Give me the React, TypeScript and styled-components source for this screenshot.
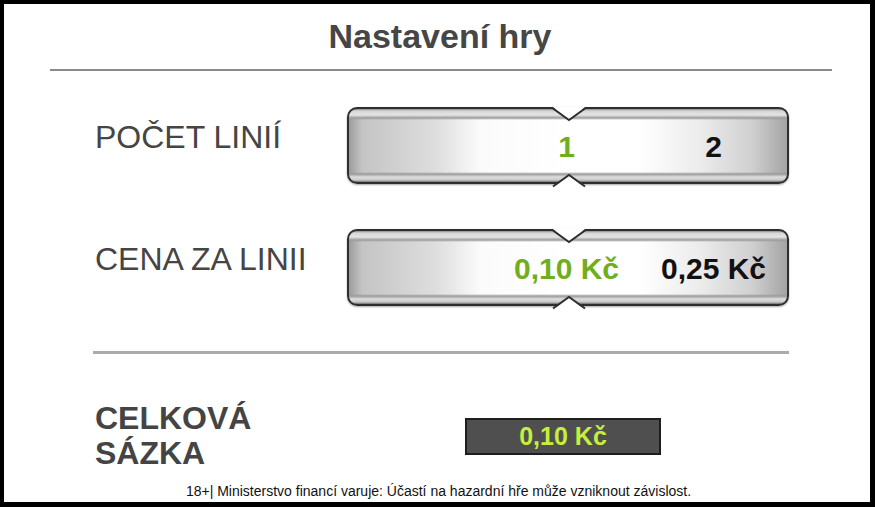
import React from 'react';
import styled, { createGlobalStyle } from 'styled-components';

const GlobalStyle = createGlobalStyle`
  html, body {
    margin: 0;
    padding: 0;
    background: #ffffff;
  }
  body {
    font-family: 'Liberation Sans', Arial, sans-serif;
  }
`;

const Frame = styled.div`
  box-sizing: border-box;
  width: 875px;
  height: 507px;
  border-style: solid;
  border-color: #000;
  border-width: 4px 5px 5px 4px;
  background: #fff;
  display: flex;
  flex-direction: column;
  overflow: hidden;
`;

const Title = styled.h1`
  margin: 12px 0 0;
  height: 41px;
  line-height: 41px;
  font-size: 34px;
  font-weight: 700;
  color: #464646;
  text-align: center;
  padding-left: 6px;
`;

const Divider = styled.div<{ $left: number; $width: number; $thick: number; $color: string; $top: number }>`
  margin: ${({ $top }) => $top}px 0 0 ${({ $left }) => $left}px;
  width: ${({ $width }) => $width}px;
  height: ${({ $thick }) => $thick}px;
  background: ${({ $color }) => $color};
`;

const Row = styled.div<{ $top: number }>`
  display: flex;
  align-items: flex-start;
  margin: ${({ $top }) => $top}px 0 0 91px;
`;

const RowLabel = styled.div`
  width: 252px;
  margin-top: 12px;
  font-size: 32px;
  line-height: 37px;
  color: #454545;
  white-space: nowrap;
`;

const Slider = styled.div`
  position: relative;
  box-sizing: border-box;
  width: 442px;
  height: 77px;
  border: 2px solid #2e2e2e;
  border-radius: 10px;
  box-shadow: 0 1px 2px rgba(0, 0, 0, 0.35);
  background:
    linear-gradient(to bottom, #8c8c8c 0, #d6d6d6 2px, #e4e4e4 6px, #b4b4b4 8px, #9a9a9a 9px, rgba(255,255,255,0) 11px) top / 100% 12px no-repeat,
    linear-gradient(to top, #6e6e6e 0, #c8c8c8 2px, #dedede 5px, #b0b0b0 7px, #9a9a9a 8px, rgba(255,255,255,0) 10px) bottom / 100% 11px no-repeat,
    linear-gradient(to right, #9c9c9c 0%, #c4c4c4 3%, #d2d2d2 12%, #dedede 20%, #fbfbfb 30%, #ffffff 50%, #ffffff 66%, #ececec 80%, #d0d0d0 92%, #a4a4a4 100%);
  display: flex;
  align-items: center;
  padding-left: 144px;
`;

const Notches = styled.svg`
  position: absolute;
  left: -2px;
  top: -2px;
  pointer-events: none;
`;

const Cell = styled.div<{ $active: boolean }>`
  width: 148px;
  text-align: center;
  font-size: 30px;
  font-weight: 700;
  color: ${({ $active }) => ($active ? '#70ae1e' : '#111')};
  white-space: nowrap;
  margin-top: 2px;
`;

const TotalRow = styled.div`
  display: flex;
  align-items: flex-start;
  margin: 47px 0 0 91px;
`;

const TotalLabel = styled.div`
  width: 370px;
  font-size: 32px;
  line-height: 35px;
  font-weight: 700;
  color: #444;
`;

const TotalBox = styled.div`
  box-sizing: border-box;
  margin-top: 17px;
  width: 196px;
  height: 37px;
  background: #4f4f4f;
  border: 2px solid #1e1e1e;
  display: flex;
  align-items: center;
  justify-content: center;
  font-size: 25px;
  font-weight: 700;
  color: #c6ef3c;
`;

const Footer = styled.div`
  margin-top: 12px;
  text-align: center;
  font-size: 14px;
  line-height: 16px;
  color: #111;
  white-space: nowrap;
  padding-left: 3px;
`;

const NotchOverlay = () => (
  <Notches width="446" height="81" viewBox="0 0 446 81">
    <polygon points="206,0 222,13 238,0" fill="#fff" />
    <polyline points="206,1.5 222,13 238,1.5" fill="none" stroke="#2e2e2e" strokeWidth="2" />
    <polygon points="206,81 222,68 238,81" fill="#fff" />
    <polyline points="206,79.5 222,68 238,79.5" fill="none" stroke="#2e2e2e" strokeWidth="2" />
  </Notches>
);

type SliderProps = { label: string; values: string[]; active: number; top: number };

const SettingRow = ({ label, values, active, top }: SliderProps) => (
  <Row $top={top}>
    <RowLabel>{label}</RowLabel>
    <Slider>
      <NotchOverlay />
      {values.map((v, i) => (
        <Cell key={v} $active={i === active}>
          {v}
        </Cell>
      ))}
    </Slider>
  </Row>
);

export default function App() {
  return (
    <>
      <GlobalStyle />
      <Frame>
        <Title>Nastavení hry</Title>
        <Divider $top={12} $left={46} $width={782} $thick={2} $color="#8a8a8a" />
        <SettingRow label="POČET LINIÍ" values={['1', '2']} active={0} top={36} />
        <SettingRow label="CENA ZA LINII" values={['0,10 Kč', '0,25 Kč']} active={0} top={45} />
        <Divider $top={45} $left={89} $width={696} $thick={3} $color="#ababab" />
        <TotalRow>
          <TotalLabel>
            CELKOVÁ
            <br />
            SÁZKA
          </TotalLabel>
          <TotalBox>0,10 Kč</TotalBox>
        </TotalRow>
        <Footer>18+| Ministerstvo financí varuje: Účastí na hazardní hře může vzniknout závislost.</Footer>
      </Frame>
    </>
  );
}
